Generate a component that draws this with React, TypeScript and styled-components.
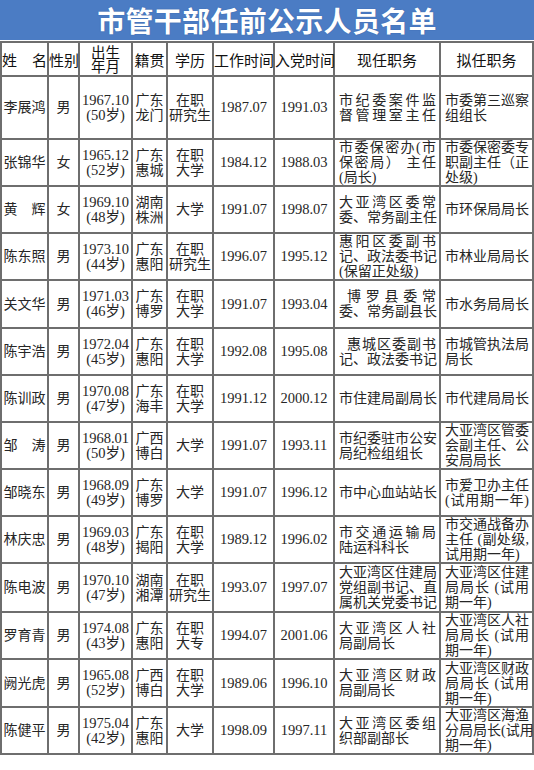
import React from 'react';
import styled, { createGlobalStyle } from 'styled-components';

const Global = createGlobalStyle`
  html, body { margin: 0; padding: 0; background: #ffffff; }
  body {
    width: 534px;
    font-family: "Liberation Serif", "Noto Sans CJK SC", serif;
    color: #262626;
  }
`;

const Page = styled.div`
  width: 534px;
`;

const TitleBar = styled.div`
  height: 40px;
  background: #4b7cc4;
  display: flex;
  align-items: center;
  justify-content: center;
  color: #ffffff;
  font-family: "Noto Sans CJK SC", sans-serif;
  font-weight: 700;
  font-size: 28px;
  letter-spacing: 0.3px;
  text-shadow: 0 0 1px #2a5597;
`;

const Table = styled.table`
  margin-top: 1px;
  width: 534px;
  border-collapse: collapse;
  table-layout: fixed;
`;

const Col = styled.col<{ $w: number }>`
  width: ${(p) => p.$w}px;
`;

const Row = styled.tr<{ $h: number }>`
  height: ${(p) => p.$h}px;
`;

const HeadCell = styled.th`
  border: 2px solid #6e6e6e;
  padding: 0;
  font-family: "Noto Sans CJK SC", sans-serif;
  font-weight: 400;
  font-size: 15px;
  line-height: 15px;
  color: #111111;
  text-align: center;
  vertical-align: middle;
  white-space: nowrap;
`;

const HeadStack = styled.div`
  white-space: pre-line;
  font-size: 14.5px;
  line-height: 14px;
`;

const Cell = styled.td<{ $left?: boolean; $big?: boolean }>`
  border: 2px solid #6e6e6e;
  padding: ${(p) => (p.$left ? '0 3px 0 4px' : '0')};
  font-size: ${(p) => (p.$big ? '14.5px' : '14px')};
  line-height: 15px;
  text-align: ${(p) => (p.$left ? 'left' : 'center')};
  vertical-align: middle;
  white-space: nowrap;
  overflow: visible;
`;

const Line = styled.div<{ $full?: boolean; $indent?: boolean }>`
  white-space: nowrap;
  text-align: inherit;
  text-align-last: ${(p) => (p.$full ? 'justify' : 'auto')};
  text-justify: inter-character;
  padding-left: ${(p) => (p.$indent ? '8px' : '0')};
`;

type Person = {
  h: number;
  name: string;
  sex: string;
  birth: string;
  age: string;
  origin: string[];
  edu: string[];
  work: string;
  party: string;
  cur: string;
  next: string;
};

const people: Person[] = [
  { h: 63, name: '李展鸿', sex: '男', birth: '1967.10', age: '(50岁)', origin: ['广东', '龙门'], edu: ['在职', '研究生'], work: '1987.07', party: '1991.03', cur: '市纪委案件监\n督管理室主任~', next: '市委第三巡察\n组组长' },
  { h: 47, name: '张锦华', sex: '女', birth: '1965.12', age: '(52岁)', origin: ['广东', '惠城'], edu: ['在职', '大学'], work: '1984.12', party: '1988.03', cur: '市委保密办(市\n保密局） 主任\n(局长)', next: '市委保密委专\n职副主任（正\n处级)' },
  { h: 47, name: '黄　辉', sex: '女', birth: '1969.10', age: '(48岁)', origin: ['湖南', '株洲'], edu: ['大学'], work: '1991.07', party: '1998.07', cur: '大亚湾区委常\n委、常务副主任~', next: '市环保局局长' },
  { h: 47, name: '陈东照', sex: '男', birth: '1973.10', age: '(44岁)', origin: ['广东', '惠阳'], edu: ['在职', '研究生'], work: '1996.07', party: '1995.12', cur: '惠阳区委副书\n记、政法委书记\n(保留正处级)', next: '市林业局局长' },
  { h: 48, name: '关文华', sex: '男', birth: '1971.03', age: '(46岁)', origin: ['广东', '博罗'], edu: ['在职', '大学'], work: '1991.07', party: '1993.04', cur: ' 博罗县委常\n委、常务副县长~', next: '市水务局局长' },
  { h: 47, name: '陈宇浩', sex: '男', birth: '1972.04', age: '(45岁)', origin: ['广东', '惠阳'], edu: ['在职', '大学'], work: '1992.08', party: '1995.08', cur: ' 惠城区委副书\n记、政法委书记~', next: '市城管执法局\n局长' },
  { h: 47, name: '陈训政', sex: '男', birth: '1970.08', age: '(47岁)', origin: ['广东', '海丰'], edu: ['在职', '大学'], work: '1991.12', party: '2000.12', cur: '市住建局副局长', next: '市代建局局长' },
  { h: 47, name: '邹　涛', sex: '男', birth: '1968.01', age: '(50岁)', origin: ['广西', '博白'], edu: ['大学'], work: '1991.07', party: '1993.11', cur: '市纪委驻市公安\n局纪检组组长', next: '大亚湾区管委\n会副主任、公\n安局局长' },
  { h: 47, name: '邹晓东', sex: '男', birth: '1968.09', age: '(49岁)', origin: ['广东', '博罗'], edu: ['大学'], work: '1991.07', party: '1996.12', cur: '市中心血站站长', next: '市爱卫办主任\n(试用期一年)~' },
  { h: 47, name: '林庆忠', sex: '男', birth: '1969.03', age: '(48岁)', origin: ['广东', '揭阳'], edu: ['在职', '大学'], work: '1989.12', party: '1996.02', cur: '市交通运输局\n陆运科科长', next: '市交通战备办\n主任 (副处级,\n试用期一年)' },
  { h: 49, name: '陈电波', sex: '男', birth: '1970.10', age: '(47岁)', origin: ['湖南', '湘潭'], edu: ['在职', '研究生'], work: '1993.07', party: '1997.07', cur: '大亚湾区住建局\n党组副书记、直\n属机关党委书记~', next: '大亚湾区住建\n局局长 (试用\n期一年)' },
  { h: 45, name: '罗育青', sex: '男', birth: '1974.08', age: '(43岁)', origin: ['广东', '惠阳'], edu: ['在职', '大专'], work: '1994.07', party: '2001.06', cur: '大亚湾区人社\n局副局长', next: '大亚湾区人社\n局局长 (试用\n期一年)' },
  { h: 48, name: '阙光虎', sex: '男', birth: '1965.08', age: '(52岁)', origin: ['广西', '博白'], edu: ['在职', '大学'], work: '1989.06', party: '1996.10', cur: '大亚湾区财政\n局副局长', next: '大亚湾区财政\n局局长 (试用\n期一年)' },
  { h: 47, name: '陈健平', sex: '男', birth: '1975.04', age: '(42岁)', origin: ['广东', '惠阳'], edu: ['大学'], work: '1998.09', party: '1997.11', cur: '大亚湾区委组\n织部副部长', next: '大亚湾区海渔\n分局局长(试用\n期一年)' },
];

const widths = [47, 31, 53, 35, 46, 61, 60, 106, 93];

function JobText({ text }: { text: string }) {
  const fullLast = text.endsWith('~');
  const lines = (fullLast ? text.slice(0, -1) : text).split('\n');
  return (
    <>
      {lines.map((l, i) => {
        const indent = l.startsWith(' ');
        const isLast = i === lines.length - 1;
        return (
          <Line key={i} $full={!isLast || fullLast} $indent={indent}>
            {indent ? l.slice(1) : l}
          </Line>
        );
      })}
    </>
  );
}

export default function App() {
  return (
    <Page>
      <Global />
      <TitleBar>市管干部任前公示人员名单</TitleBar>
      <Table>
        <colgroup>
          {widths.map((w, i) => (
            <Col key={i} $w={w} />
          ))}
        </colgroup>
        <tbody>
          <Row $h={34}>
            <HeadCell>姓　名</HeadCell>
            <HeadCell>性别</HeadCell>
            <HeadCell>
              <HeadStack>{'出生\n年月'}</HeadStack>
            </HeadCell>
            <HeadCell>籍贯</HeadCell>
            <HeadCell>学历</HeadCell>
            <HeadCell>工作时间</HeadCell>
            <HeadCell>入党时间</HeadCell>
            <HeadCell>现任职务</HeadCell>
            <HeadCell>拟任职务</HeadCell>
          </Row>
          {people.map((p) => (
            <Row key={p.name} $h={p.h}>
              <Cell>{p.name}</Cell>
              <Cell>{p.sex}</Cell>
              <Cell $big>
                <Line>{p.birth}</Line>
                <Line>{p.age}</Line>
              </Cell>
              <Cell>
                {p.origin.map((o, i) => (
                  <Line key={i}>{o}</Line>
                ))}
              </Cell>
              <Cell>
                {p.edu.map((e, i) => (
                  <Line key={i}>{e}</Line>
                ))}
              </Cell>
              <Cell $big>{p.work}</Cell>
              <Cell $big>{p.party}</Cell>
              <Cell $left>
                <JobText text={p.cur} />
              </Cell>
              <Cell $left>
                <JobText text={p.next} />
              </Cell>
            </Row>
          ))}
        </tbody>
      </Table>
    </Page>
  );
}
